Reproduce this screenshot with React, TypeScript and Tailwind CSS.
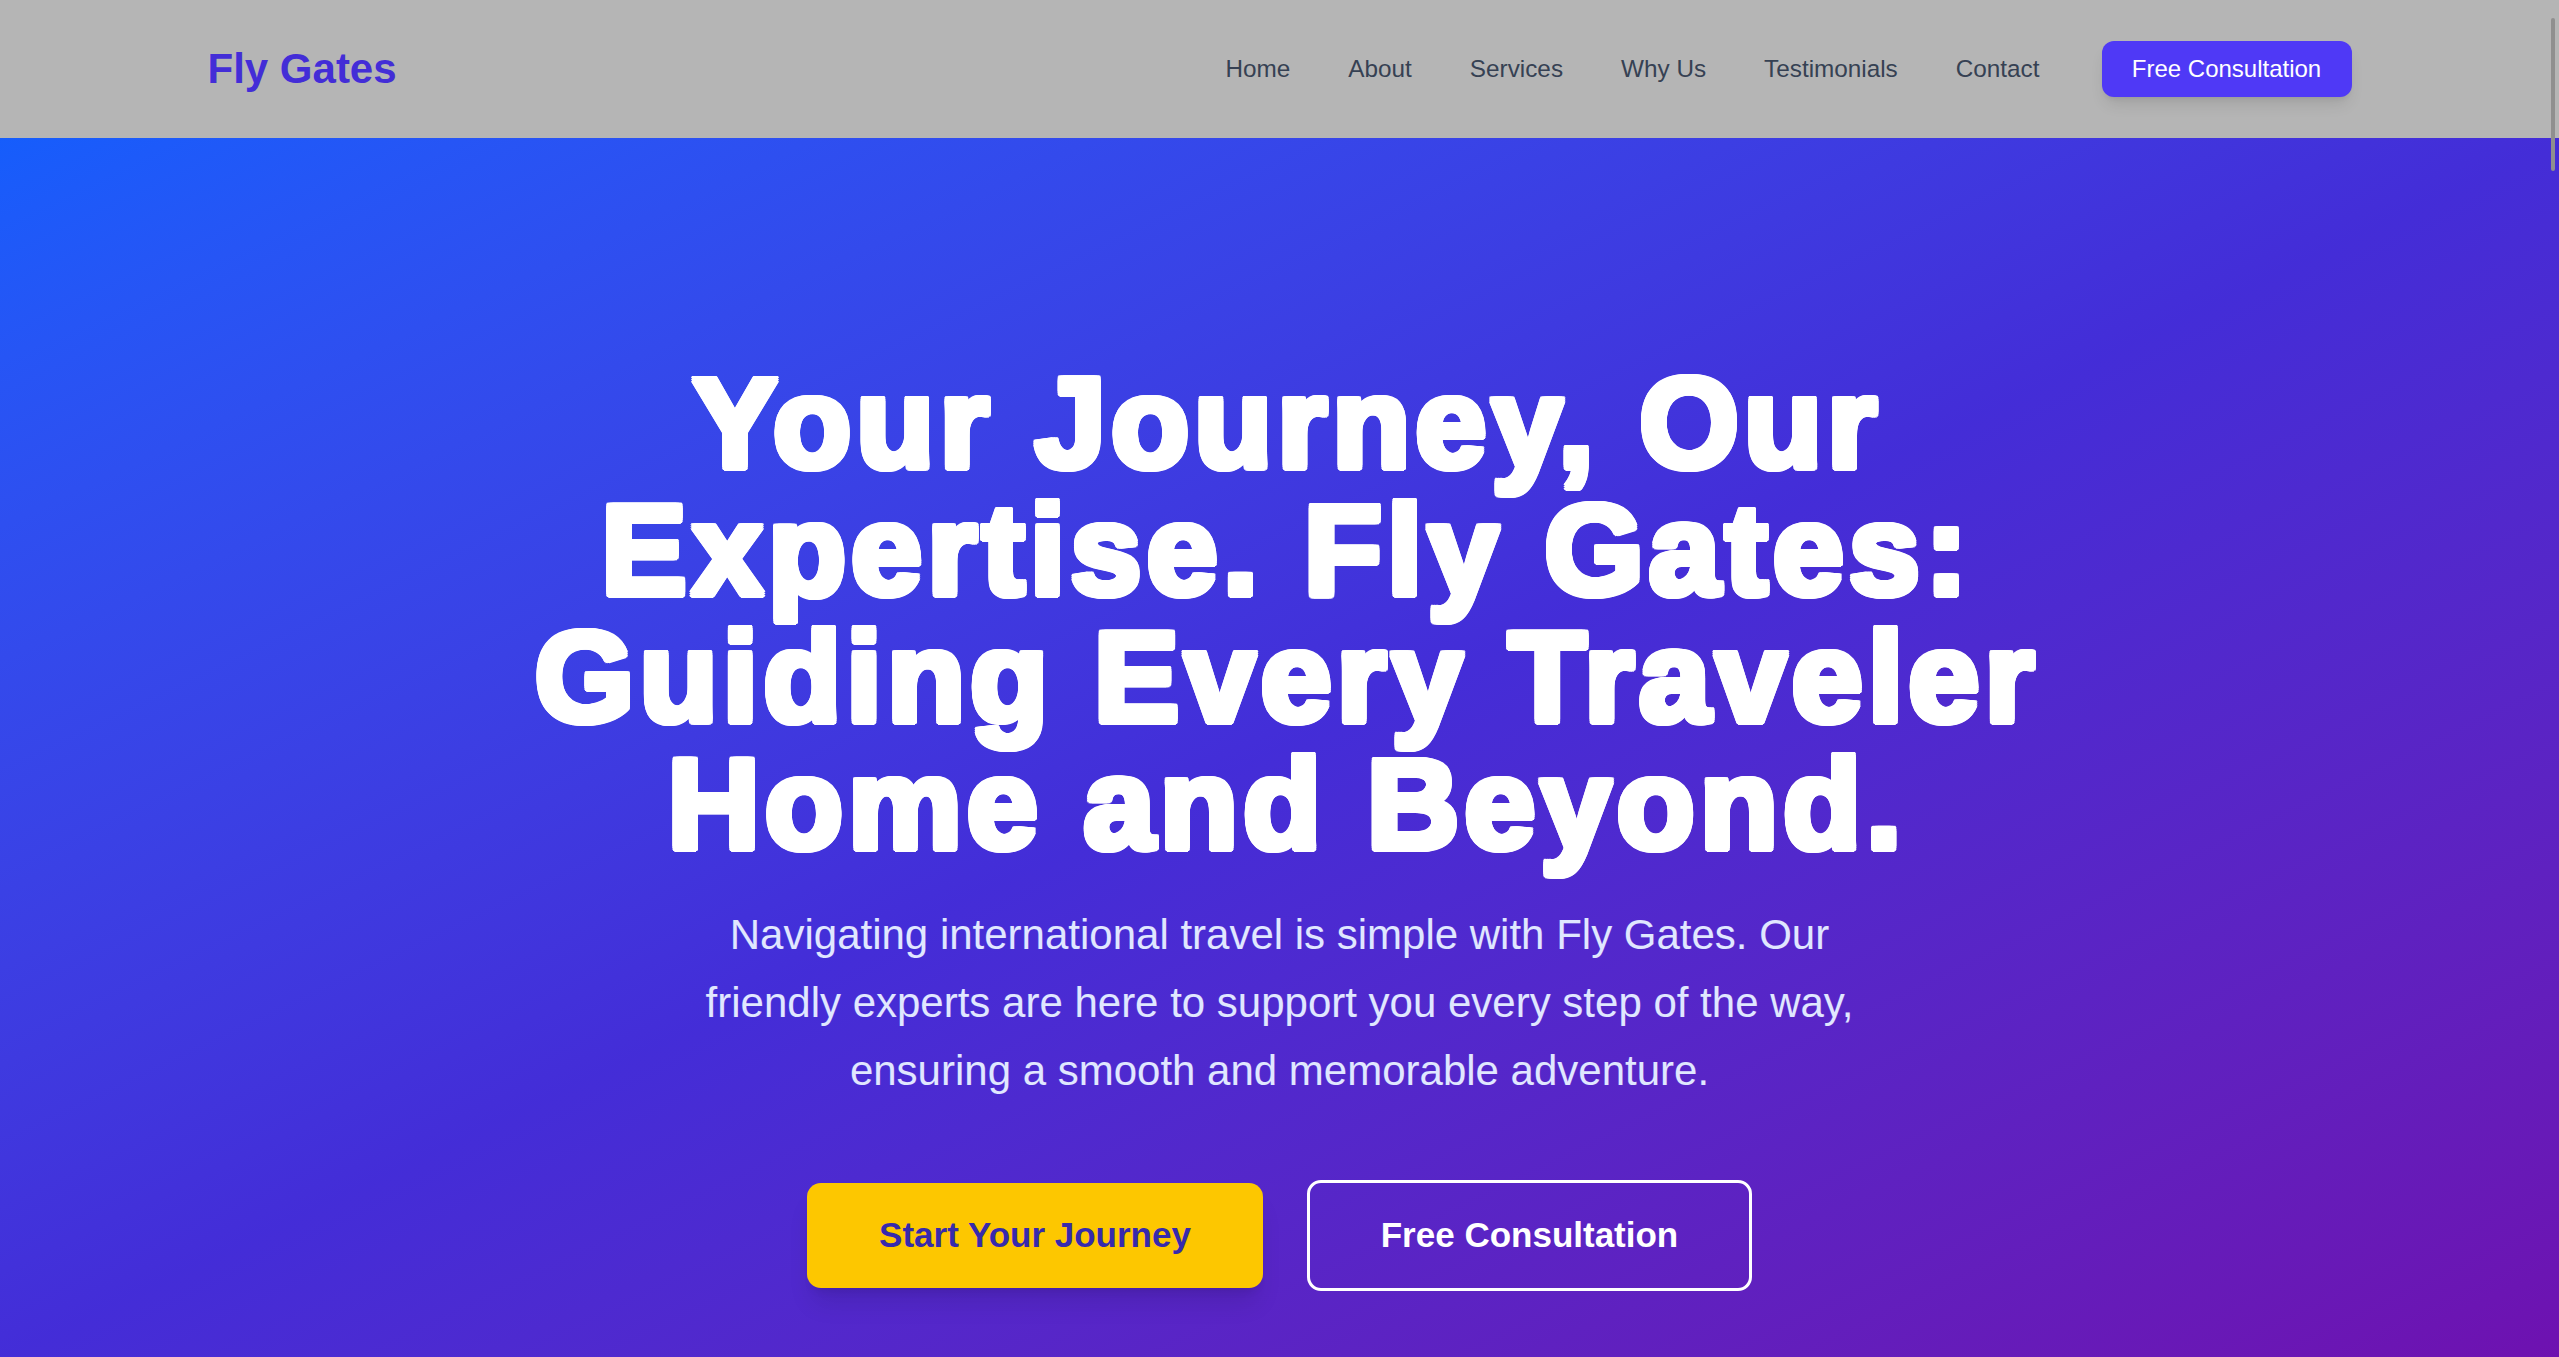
import React from "react";

export default function App() {
  const links = ["Home", "About", "Services", "Why Us", "Testimonials", "Contact"];
  return (
    <div className="relative h-[1357px] w-full overflow-hidden font-['Liberation_Sans',Arial,sans-serif]">
      <header className="h-[138px] w-full bg-[#b5b5b5]">
        <div className="mx-auto flex h-full w-[2144px] items-center justify-between">
          <a className="text-[42px] font-bold leading-none text-indigo-700">Fly Gates</a>
          <nav className="flex items-center">
            <ul className="flex items-center gap-[58px]">
              {links.map((l) => (
                <li key={l} className="text-[24.3px] leading-[36px] text-gray-700">
                  {l}
                </li>
              ))}
            </ul>
            <button className="ml-[62px] h-[56px] w-[250px] rounded-xl bg-indigo-600 text-[24px] text-white shadow-lg">
              Free Consultation
            </button>
          </nav>
        </div>
      </header>
      <section className="flex h-[1219px] w-full flex-col items-center bg-linear-to-br from-blue-600 via-indigo-700 to-purple-800 pt-[221px]">
        <h1 className="max-w-[1700px] pl-[15px] text-center text-[128px] font-black leading-[127px] tracking-[5px] text-white [text-shadow:3.5px_0_0_#fff,3.5px_1.7px_0_#fff,3px_3px_0_#fff,1.7px_3.5px_0_#fff,0_3.5px_0_#fff,-1.7px_3.5px_0_#fff,-3px_3px_0_#fff,-3.5px_1.7px_0_#fff,-3.5px_0_0_#fff,-3.5px_-1.7px_0_#fff,-3px_-3px_0_#fff,-1.7px_-3.5px_0_#fff,0_-3.5px_0_#fff,1.7px_-3.5px_0_#fff,3px_-3px_0_#fff,3.5px_-1.7px_0_#fff]">
          Your Journey, Our Expertise. Fly Gates: Guiding Every Traveler Home and Beyond.
        </h1>
        <p className="mt-[34px] max-w-[1200px] text-center text-[42px] leading-[68px] text-indigo-100">
          Navigating international travel is simple with Fly Gates. Our friendly experts are here to support you every step of the way, ensuring a smooth and memorable adventure.
        </p>
        <div className="mt-[75px] flex items-center gap-[44px]">
          <button className="flex h-[105px] w-[456px] items-center justify-center rounded-[14px] bg-yellow-400 text-[35px] font-bold text-indigo-800 shadow-xl">
            Start Your Journey
          </button>
          <button className="flex h-[111px] w-[445px] items-center justify-center rounded-[14px] border-[3px] border-white text-[35px] font-bold text-white">
            Free Consultation
          </button>
        </div>
      </section>
      <div className="absolute right-[4px] top-[18px] h-[153px] w-[4px] rounded-full bg-[#8f8f8f]" />
    </div>
  );
}
